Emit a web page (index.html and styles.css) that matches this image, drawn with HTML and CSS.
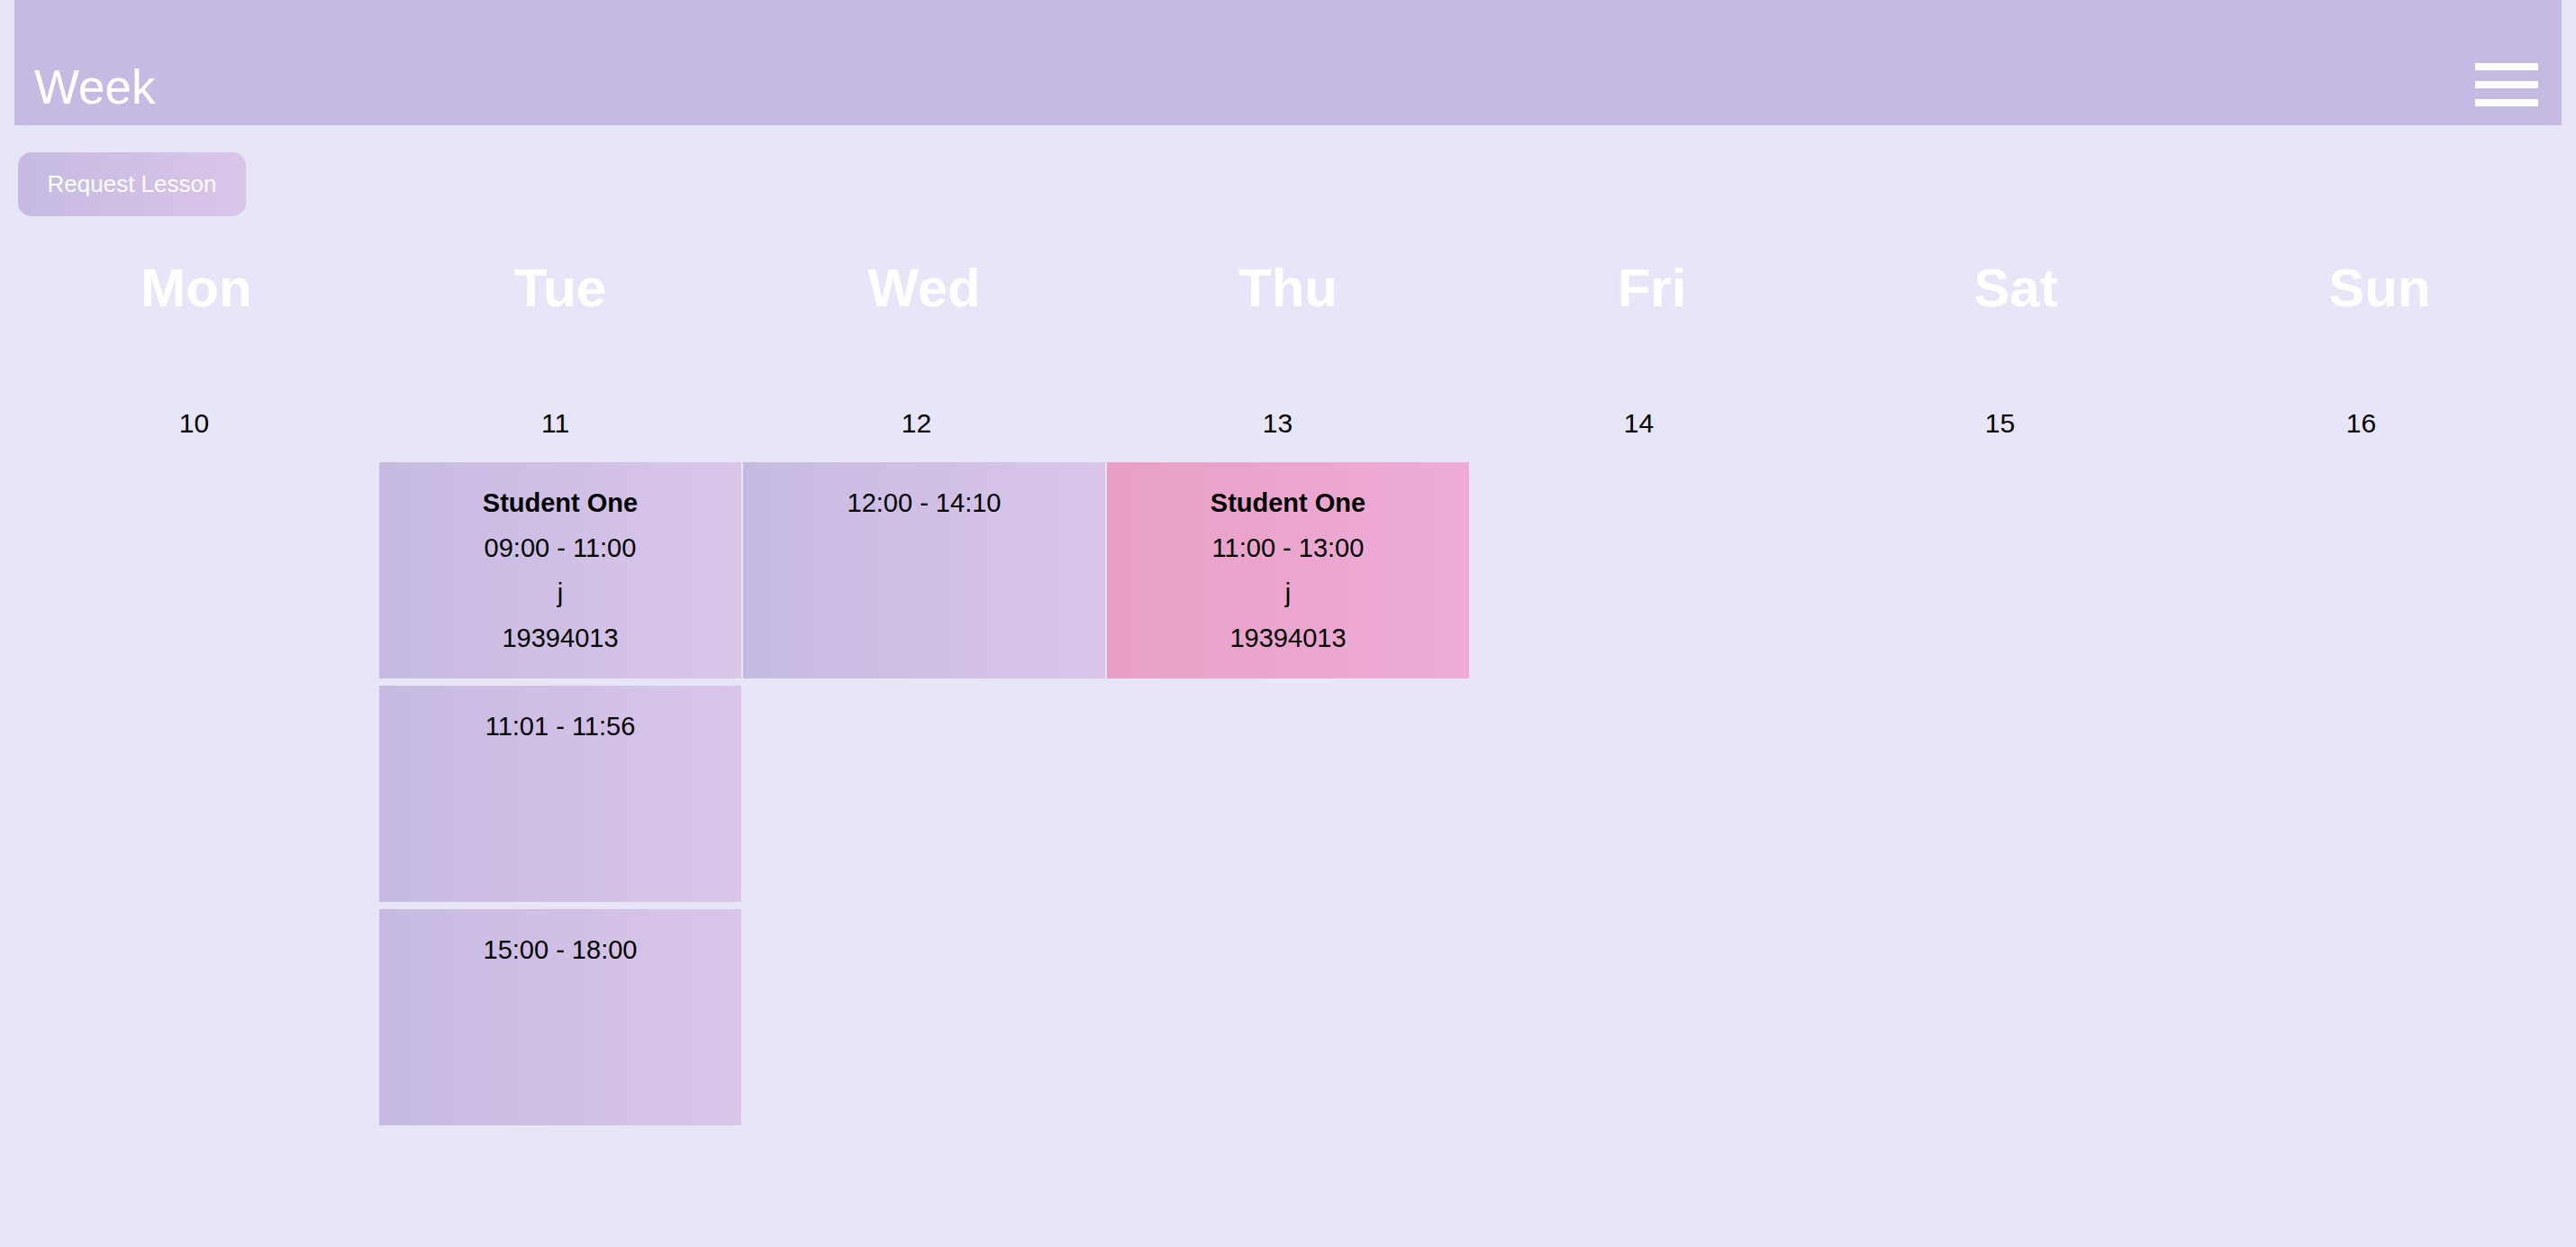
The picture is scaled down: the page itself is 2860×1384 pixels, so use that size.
FILE: index.html
```html
<!DOCTYPE html>
<html lang="en">
<head>
  <meta charset="UTF-8">
  <meta name="viewport" content="width=device-width, initial-scale=1.0">
  <title>Week</title>
  <link rel="stylesheet" href="styles.css">
</head>
<body>
  <header>
    <h1>Week</h1>
    <div class="menu">
      <span></span>
      <span></span>
      <span></span>
    </div>
  </header>
  <button class="request-btn">Request Lesson</button>

  <div class="day-names">
    <h2>Mon</h2>
    <h2>Tue</h2>
    <h2>Wed</h2>
    <h2>Thu</h2>
    <h2>Fri</h2>
    <h2>Sat</h2>
    <h2>Sun</h2>
  </div>

  <div class="dates">
    <div>10</div>
    <div>11</div>
    <div>12</div>
    <div>13</div>
    <div>14</div>
    <div>15</div>
    <div>16</div>
  </div>

  <div id="week">
    <div class="lessons"></div>
    <div class="lessons">
      <div class="lesson">
        <div class="student">Student One</div>
        <div>09:00 - 11:00</div>
        <div>j</div>
        <div>19394013</div>
      </div>
      <div class="lesson">
        <div>11:01 - 11:56</div>
      </div>
      <div class="lesson">
        <div>15:00 - 18:00</div>
      </div>
    </div>
    <div class="lessons">
      <div class="lesson">
        <div>12:00 - 14:10</div>
      </div>
    </div>
    <div class="lessons">
      <div class="lesson booked">
        <div class="student">Student One</div>
        <div>11:00 - 13:00</div>
        <div>j</div>
        <div>19394013</div>
      </div>
    </div>
    <div class="lessons"></div>
    <div class="lessons"></div>
    <div class="lessons"></div>
  </div>
</body>
</html>
```

FILE: styles.css
```css
body {
  margin: 0;
  padding: 0 16px;
  min-height: 1384px;
  background: #e6e6f8;
  font-family: "Liberation Sans", Arial, sans-serif;
  color: #000;
}
header {
  display: flex;
  align-items: center;
  justify-content: space-between;
  box-sizing: border-box;
  height: 139px;
  padding: 49px 26px 0 22px;
  background: #c6bae2;
}
header h1 {
  margin: 5px 0 0;
  font-size: 53px;
  font-weight: normal;
  line-height: 1;
  color: #fff;
}
.menu {
  display: flex;
  flex-direction: column;
  gap: 12px;
  width: 70px;
}
.menu span {
  display: block;
  height: 8px;
  background: #fff;
}
.request-btn {
  display: block;
  width: 253px;
  height: 71px;
  margin: 30px 0 0 4px;
  border: none;
  border-radius: 15px;
  background: linear-gradient(to right, #c6bae2, #dac5e9);
  color: #fff;
  font-family: "Liberation Sans", Arial, sans-serif;
  font-size: 26px;
  cursor: pointer;
}
.day-names {
  display: grid;
  grid-template-columns: repeat(7, 1fr);
  margin-top: 45px;
  text-align: center;
}
.day-names h2 {
  margin: 0;
  font-size: 60px;
  font-weight: bold;
  line-height: 69px;
  color: #fff;
}
.dates {
  display: grid;
  grid-template-columns: repeat(7, 401px);
  margin: 99px 0 0 -1px;
  font-size: 30px;
  line-height: 34px;
  text-align: center;
}
#week {
  display: grid;
  grid-template-columns: repeat(7, 1fr);
  margin-top: 26px;
}
.lessons {
  display: flex;
  flex-direction: column;
  gap: 8px;
  padding: 0 1px;
}
.lesson {
  box-sizing: border-box;
  height: 240px;
  padding: 20px 0;
  background: linear-gradient(to right, #c6bae2, #dac5e9);
  font-size: 29px;
  line-height: 50px;
  text-align: center;
}
.lesson.booked {
  background: linear-gradient(to right, #e8a0c4, #eeabd9);
}
.student {
  font-weight: bold;
}
```
